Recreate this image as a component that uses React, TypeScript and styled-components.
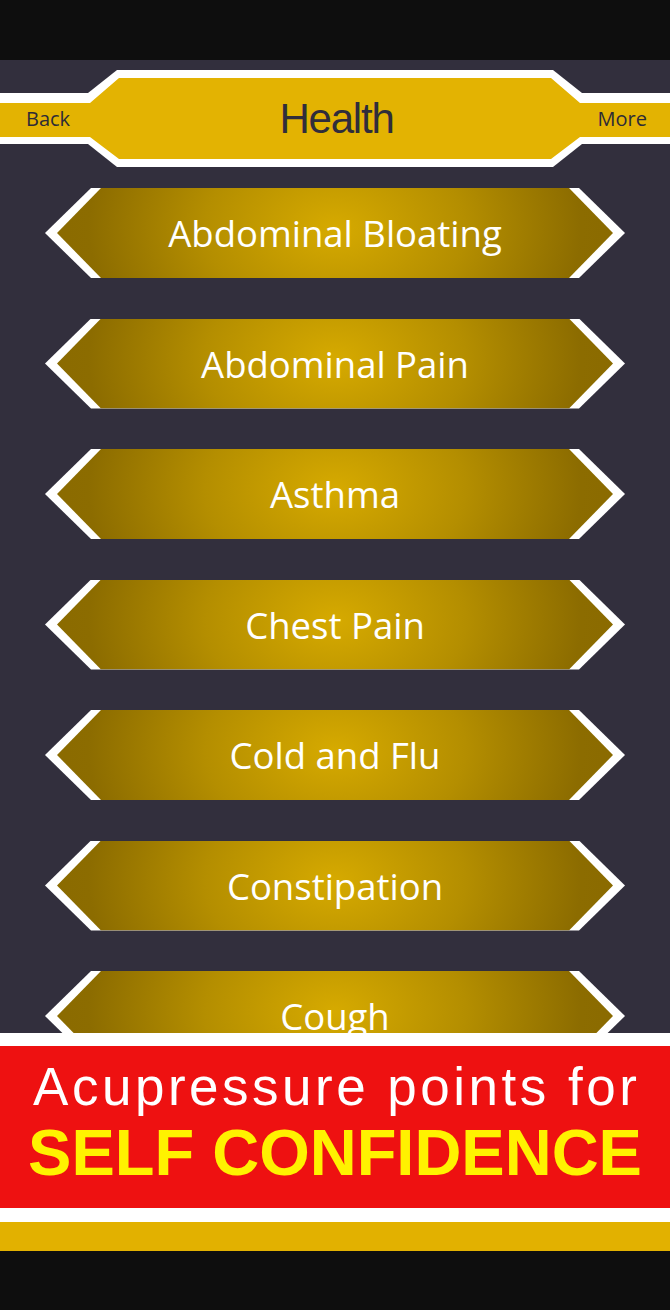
import React from "react";
import styled, { createGlobalStyle } from "styled-components";

const GlobalStyle = createGlobalStyle`
  html, body { margin: 0; padding: 0; background: #0e0e0e; }
  * { box-sizing: border-box; }
`;

const Screen = styled.div`
  width: 670px;
  height: 1310px;
  display: flex;
  flex-direction: column;
  background: #0e0e0e;
  overflow: hidden;
`;

const StatusArea = styled.div`
  height: 60px;
  flex: none;
  background: #0e0e0e;
`;

const Panel = styled.main`
  flex: none;
  height: 973px;
  background: #322f3d;
  overflow: hidden;
  display: flex;
  flex-direction: column;
  padding-top: 10px;
`;

const HeaderBar = styled.header`
  position: relative;
  height: 97px;
  flex: none;
  display: grid;
  grid-template-columns: 1fr auto 1fr;
  align-items: center;
  padding: 0 23px 0 26px;
  background: linear-gradient(
    to bottom,
    transparent 23px,
    #ffffff 23px,
    #ffffff 74px,
    transparent 74px
  );
  &::before {
    content: "";
    position: absolute;
    inset: 0;
    background: #ffffff;
    clip-path: polygon(117px 0, 553px 0, 582px 23px, 582px 74px, 553px 97px, 117px 97px, 88px 74px, 88px 23px);
  }
  &::after {
    content: "";
    position: absolute;
    inset: 0;
    background: #e3b302;
    clip-path: polygon(119px 8px, 551px 8px, 580px 33px, 670px 33px, 670px 67px, 580px 67px, 551px 89px, 119px 89px, 90px 67px, 0 67px, 0 33px, 90px 33px);
  }
`;

const NavLink = styled.button<{ $align: "start" | "end" }>`
  position: relative;
  z-index: 1;
  justify-self: ${(p) => p.$align};
  background: none;
  border: 0;
  padding: 0;
  font-family: "Open Sans", "Noto Sans", sans-serif;
  font-size: 20px;
  line-height: 28px;
  color: #2d2b37;
  cursor: pointer;
`;

const Title = styled.h1`
  position: relative;
  z-index: 1;
  margin: 0;
  font-family: "Liberation Sans", Arial, sans-serif;
  font-weight: 400;
  font-size: 42px;
  line-height: 48px;
  letter-spacing: -1.2px;
  color: #302d3b;
`;

const List = styled.div`
  display: flex;
  flex-direction: column;
  align-items: center;
  gap: 40.5px;
  padding-top: 21px;
`;

const ItemButton = styled.button`
  flex: none;
  width: 580px;
  height: 90px;
  padding: 0;
  border: 0;
  background: #ffffff;
  cursor: pointer;
  clip-path: polygon(46px 0, 534px 0, 580px 45px, 534px 90px, 46px 90px, 0 45px);
`;

const ItemFace = styled.span`
  display: flex;
  align-items: center;
  justify-content: center;
  width: 100%;
  height: 100%;
  clip-path: polygon(56px 0, 524px 0, 568px 45px, 524px 90px, 56px 90px, 12px 45px);
  background: radial-gradient(ellipse 50% 220% at 50% 45%, #d6aa00 0%, #b48e00 45%, #8c6c00 85%, #8a6a00 100%);
  color: #ffffff;
  font-family: "Open Sans", "Noto Sans", sans-serif;
  font-size: 36.5px;
  line-height: 44px;
`;

const AdBanner = styled.section`
  flex: none;
  height: 189px;
  border-top: 13px solid #ffffff;
  border-bottom: 14px solid #ffffff;
  background: #ee1111;
  display: flex;
  flex-direction: column;
  align-items: center;
  padding-top: 11px;
  font-family: "Liberation Sans", Arial, sans-serif;
`;

const AdLine = styled.div`
  font-size: 53px;
  line-height: 59px;
  letter-spacing: 3.5px;
  color: #ffffff;
  white-space: nowrap;
  margin-right: -3.5px;
`;

const AdHeadline = styled.div`
  font-size: 65px;
  line-height: 73px;
  font-weight: 700;
  color: #fff200;
  white-space: nowrap;
`;

const BottomBar = styled.div`
  flex: none;
  height: 29px;
  background: #e2b100;
`;

const NavArea = styled.div`
  flex: none;
  height: 59px;
  background: #0e0e0e;
`;

const topics = [
  "Abdominal Bloating",
  "Abdominal Pain",
  "Asthma",
  "Chest Pain",
  "Cold and Flu",
  "Constipation",
  "Cough",
];

export default function App() {
  return (
    <>
      <GlobalStyle />
      <Screen>
        <StatusArea />
        <Panel>
          <HeaderBar>
            <NavLink $align="start">Back</NavLink>
            <Title>Health</Title>
            <NavLink $align="end">More</NavLink>
          </HeaderBar>
          <List>
            {topics.map((t) => (
              <ItemButton key={t}>
                <ItemFace>{t}</ItemFace>
              </ItemButton>
            ))}
          </List>
        </Panel>
        <AdBanner>
          <AdLine>Acupressure points for</AdLine>
          <AdHeadline>SELF CONFIDENCE</AdHeadline>
        </AdBanner>
        <BottomBar />
        <NavArea />
      </Screen>
    </>
  );
}
